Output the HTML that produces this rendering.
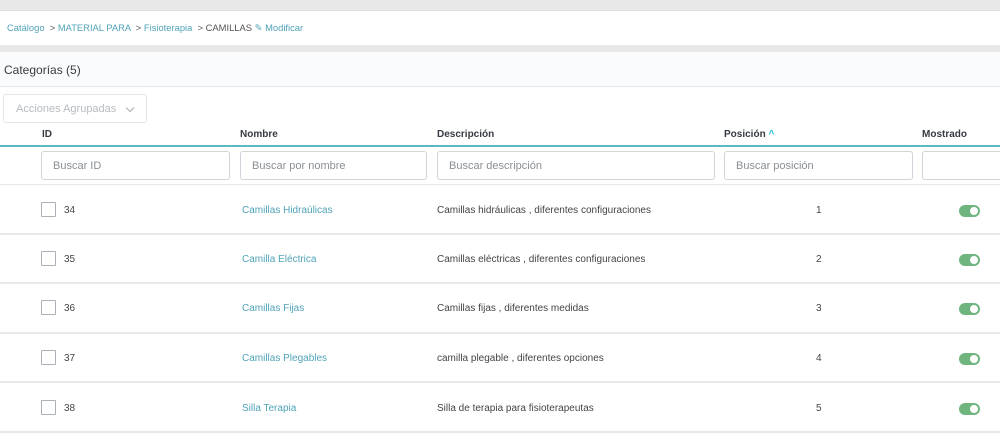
<!DOCTYPE html>
<html><head><meta charset="utf-8"><style>
*{margin:0;padding:0;box-sizing:border-box}
body{width:1000px;height:435px;overflow:hidden;background:#fff;font-family:"Liberation Sans",sans-serif;position:relative;color:#444}
.a{position:absolute}
.t{font-size:10px;white-space:nowrap}
.in{position:absolute;top:151px;height:29px;border:1px solid #cfd5db;border-radius:3px;font-size:11px;color:#8a8f94;padding:8px 11px;background:#fff;white-space:nowrap}
.cb{position:absolute;left:41px;width:15px;height:15px;border:1px solid #aab0b5;border-radius:1px;background:#fff}
.sep{position:absolute;left:0;width:1000px;height:2px;background:#e6e9ec}
.tg{position:absolute;left:959px;width:21px;height:12px;border-radius:6px;background:#70b580}
.tg:after{content:"";position:absolute;right:2px;top:2px;width:8px;height:8px;border-radius:50%;background:#fff}
.lnk{color:#4fa3b8}
</style></head><body>
<div class="a" style="left:0;top:0;width:1000px;height:10px;background:#e8e8e8"></div>
<div class="a" style="left:0;top:10px;width:1000px;height:1px;background:#ddd"></div>
<div class="a t" style="left:7px;top:22px;font-size:9.4px;color:#555"><span class="lnk">Catálogo</span> &nbsp;&gt; <span class="lnk">MATERIAL PARA</span> &nbsp;&gt; <span class="lnk">Fisioterapia</span> &nbsp;&gt; CAMILLAS <span class="lnk">✎ Modificar</span></div>
<div class="a" style="left:0;top:45px;width:1000px;height:7px;background:#e8e8e8"></div>
<div class="a" style="left:0;top:52px;width:1000px;height:35px;background:#fafbfc;border-bottom:1px solid #e3e6e9"></div>
<div class="a" style="left:4px;top:63px;font-size:12px;color:#363a41">Categorías (5)</div>
<div class="a" style="left:3px;top:94px;width:144px;height:29px;border:1px solid #e3e6e9;border-radius:3px;font-size:11px;color:#b7bcc0;padding:8px 12px;white-space:nowrap">Acciones Agrupadas</div>
<svg class="a" style="left:125px;top:106px" width="10" height="7"><path d="M1 1.5L5 5.5L9 1.5" stroke="#b7bcc0" stroke-width="1.3" fill="none"/></svg>
<div class="a t" style="left:42px;top:129px;font-weight:bold;color:#363a41">ID</div>
<div class="a t" style="left:240px;top:129px;font-weight:bold;color:#363a41">Nombre</div>
<div class="a t" style="left:437px;top:129px;font-weight:bold;color:#363a41">Descripción</div>
<div class="a t" style="left:724px;top:129px;font-weight:bold;color:#363a41">Posición <span style="color:#25b9d7">^</span></div>
<div class="a t" style="left:922px;top:129px;font-weight:bold;color:#363a41">Mostrado</div>
<div class="a" style="left:0;top:145px;width:1000px;height:2px;background:#5cb8c2"></div>
<div class="in" style="left:41px;width:189px">Buscar ID</div>
<div class="in" style="left:240px;width:187px">Buscar por nombre</div>
<div class="in" style="left:437px;width:278px">Buscar descripción</div>
<div class="in" style="left:724px;width:189px">Buscar posición</div>
<div class="in" style="left:922px;width:90px"></div>
<div class="sep" style="top:184px;height:1px"></div>

<div class="cb" style="top:202px"></div><div class="a t" style="left:64px;top:205px">34</div><div class="a t lnk" style="left:242px;top:205px">Camillas Hidraúlicas</div><div class="a t" style="left:437px;top:205px">Camillas hidráulicas , diferentes configuraciones</div><div class="a t" style="left:816px;top:205px">1</div><div class="tg" style="top:205px"></div>
<div class="sep" style="top:233px"></div>
<div class="cb" style="top:251px"></div><div class="a t" style="left:64px;top:254px">35</div><div class="a t lnk" style="left:242px;top:254px">Camilla Eléctrica</div><div class="a t" style="left:437px;top:254px">Camillas eléctricas , diferentes configuraciones</div><div class="a t" style="left:816px;top:254px">2</div><div class="tg" style="top:254px"></div>
<div class="sep" style="top:282px"></div>
<div class="cb" style="top:300px"></div><div class="a t" style="left:64px;top:303px">36</div><div class="a t lnk" style="left:242px;top:303px">Camillas Fijas</div><div class="a t" style="left:437px;top:303px">Camillas fijas , diferentes medidas</div><div class="a t" style="left:816px;top:303px">3</div><div class="tg" style="top:303px"></div>
<div class="sep" style="top:332px"></div>
<div class="cb" style="top:350px"></div><div class="a t" style="left:64px;top:353px">37</div><div class="a t lnk" style="left:242px;top:353px">Camillas Plegables</div><div class="a t" style="left:437px;top:353px">camilla plegable , diferentes opciones</div><div class="a t" style="left:816px;top:353px">4</div><div class="tg" style="top:353px"></div>
<div class="sep" style="top:381px"></div>
<div class="cb" style="top:400px"></div><div class="a t" style="left:64px;top:403px">38</div><div class="a t lnk" style="left:242px;top:403px">Silla Terapia</div><div class="a t" style="left:437px;top:403px">Silla de terapia para fisioterapeutas</div><div class="a t" style="left:816px;top:403px">5</div><div class="tg" style="top:403px"></div>
<div class="sep" style="top:431px"></div>
</body></html>
